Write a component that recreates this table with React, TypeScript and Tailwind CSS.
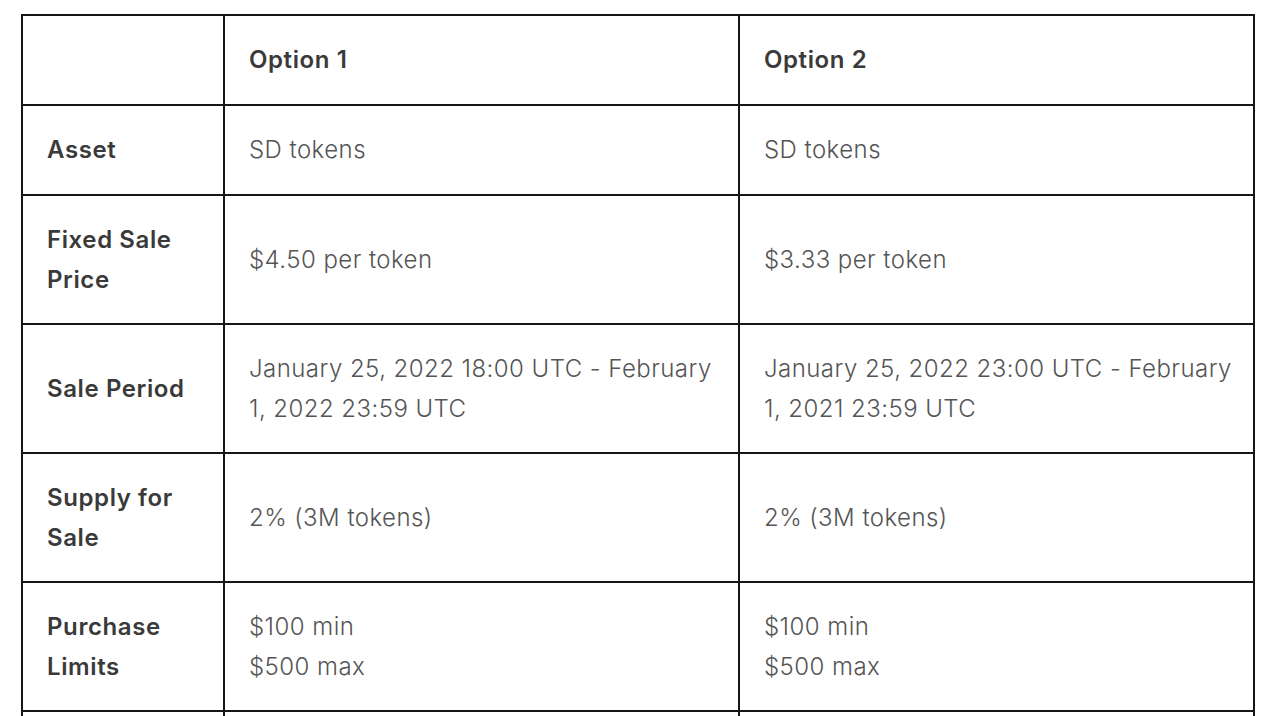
const rows: { label: string[]; a: string[]; b: string[] }[] = [
  { label: ["Asset"], a: ["SD tokens"], b: ["SD tokens"] },
  { label: ["Fixed Sale", "Price"], a: ["$4.50 per token"], b: ["$3.33 per token"] },
  {
    label: ["Sale Period"],
    a: ["January 25, 2022 18:00 UTC - February", "1, 2022 23:59 UTC"],
    b: ["January 25, 2022 23:00 UTC - February", "1, 2021 23:59 UTC"],
  },
  { label: ["Supply for", "Sale"], a: ["2% (3M tokens)"], b: ["2% (3M tokens)"] },
  { label: ["Purchase", "Limits"], a: ["$100 min", "$500 max"], b: ["$100 min", "$500 max"] },
];

const Lines = ({ lines }: { lines: string[] }) => (
  <>
    {lines.map((l, i) => (
      <span key={i} className="block whitespace-nowrap">
        {l}
      </span>
    ))}
  </>
);

const cell = "border-2 border-[#161616] px-6";

export default function App() {
  return (
    <div className="h-[716px] overflow-hidden bg-white pt-[14px] pl-[21px] font-['Inter',sans-serif]">
      <table className="border-collapse w-[1232px] table-fixed text-[24px] leading-[40px]">
        <colgroup>
          <col className="w-[202px]" />
          <col className="w-[515px]" />
          <col className="w-[515px]" />
        </colgroup>
        <thead>
          <tr>
            <th className={`${cell} py-6`}></th>
            <th className={`${cell} py-6 text-left font-semibold tracking-[0.6px] text-[#3a3a3a]`}>Option 1</th>
            <th className={`${cell} py-6 text-left font-semibold tracking-[0.6px] text-[#3a3a3a]`}>Option 2</th>
          </tr>
        </thead>
        <tbody>
          {rows.map((r, i) => {
            const pad = r.label.length > 1 || r.a.length > 1 ? "py-[23.5px]" : "py-6";
            return (
              <tr key={i}>
                <td className={`${cell} ${pad} font-semibold tracking-[0.6px] text-[#3a3a3a]`}>
                  <Lines lines={r.label} />
                </td>
                <td className={`${cell} ${pad} font-light tracking-[0.45px] text-[#555]`}>
                  <Lines lines={r.a} />
                </td>
                <td className={`${cell} ${pad} font-light tracking-[0.45px] text-[#555]`}>
                  <Lines lines={r.b} />
                </td>
              </tr>
            );
          })}
          <tr>
            <td className={`${cell} h-[90px]`}></td>
            <td className={`${cell} h-[90px]`}></td>
            <td className={`${cell} h-[90px]`}></td>
          </tr>
        </tbody>
      </table>
    </div>
  );
}
